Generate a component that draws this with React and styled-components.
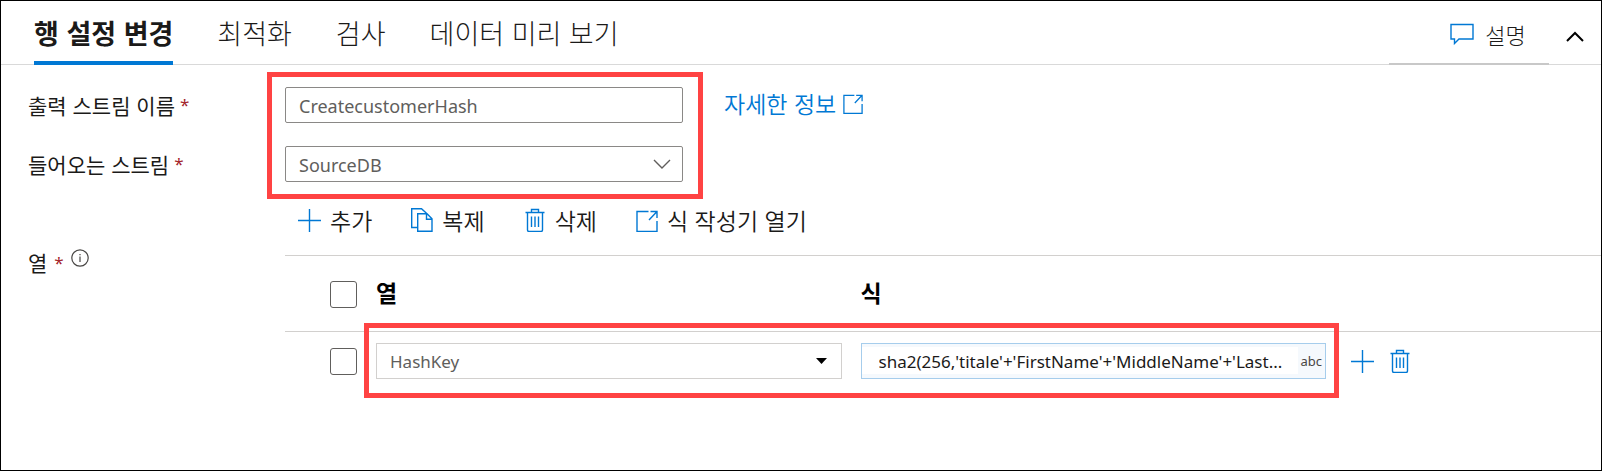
import React from 'react';
import styled, { createGlobalStyle, css } from 'styled-components';

const GlobalStyle = createGlobalStyle`
  *, *::before, *::after { box-sizing: border-box; }
  body {
    margin: 0;
    background: #ffffff;
    color: #1b1a19;
    font-family: "Noto Sans", "Noto Sans CJK KR", sans-serif;
  }
  button, input, select { font: inherit; color: inherit; margin: 0; }
  button { padding: 0; border: 0; background: none; cursor: pointer; }
`;

const BLUE = '#0078d4';
const RED = '#ff4343';
const hangul = css`font-family: "Noto Sans CJK KR", sans-serif;`;

const Page = styled.main`
  ${hangul}
  min-height: 100vh;
  border: 1px solid #000000;
`;

const Header = styled.header`
  display: flex;
  justify-content: space-between;
  height: 64px;
  border-bottom: 1px solid #d9d9d9;
`;

const Tabs = styled.nav`
  display: flex;
  gap: 44px;
  padding-left: 33px;
`;

const Tab = styled.button`
  height: 64px;
  padding-top: 4px;
  border-bottom: 4px solid ${p => (p.$active ? BLUE : 'transparent')};
  font-size: 27px;
  line-height: 56px;
  font-weight: ${p => (p.$active ? 700 : 300)};
  white-space: nowrap;
`;

const HeaderActions = styled.div`
  display: flex;
  align-items: stretch;
`;

const DescriptionButton = styled.button`
  display: flex;
  align-items: center;
  justify-content: center;
  gap: 11px;
  width: 160px;
  height: 64px;
  padding: 3px 0 0 38px;
  border-bottom: 2px solid #c8c8c8;
  font-size: 22px;
  font-weight: 300;
`;

const CollapseButton = styled.button`
  display: flex;
  align-items: center;
  justify-content: center;
  width: 52px;
  padding-top: 8px;
`;

const Form = styled.form`
  display: grid;
  grid-template-columns: 257px 398px 1fr;
  row-gap: 23px;
  padding: 22px 0 0 27px;
`;

const Label = styled.label`
  display: flex;
  align-items: center;
  gap: 5px;
  grid-column: 1;
  grid-row: ${p => p.$row};
  height: 36px;
  font-size: 21px;
  line-height: 32px;
`;

const Required = styled.span`
  color: #a4262c;
  font-family: "Noto Sans", sans-serif;
  font-size: 17px;
`;

const Field = styled.div`
  display: grid;
  align-items: center;
  grid-column: 2;
  grid-row: ${p => p.$row};
`;

const Input = styled.input`
  width: 100%;
  height: 36px;
  padding: 2px 13px 0;
  border: 1px solid #8a8886;
  border-radius: 2px;
  background: #ffffff;
  color: #605e5c;
  font-family: "Noto Sans", sans-serif;
  font-size: 18px;
  outline: 0;
`;

const SelectBox = styled.div`
  display: grid;
  align-items: center;
  width: 100%;

  & > * { grid-area: 1 / 1; }
  & > svg {
    justify-self: end;
    margin-right: ${p => (p.$plain ? '15px' : '12px')};
    pointer-events: none;
  }
`;

const Select = styled.select`
  width: 100%;
  height: 36px;
  padding: 2px 13px 0;
  appearance: none;
  border: 1px solid ${p => (p.$plain ? '#d2d0ce' : '#8a8886')};
  border-radius: ${p => (p.$plain ? '0' : '2px')};
  background: #ffffff;
  color: #605e5c;
  font-family: "Noto Sans", sans-serif;
  font-size: ${p => (p.$plain ? '17px' : '18px')};
  outline: 0;
`;

const FieldsHighlight = styled.div`
  grid-column: 2;
  grid-row: 1 / 3;
  margin: -15px -20px -17px -18px;
  border: 5px solid ${RED};
  pointer-events: none;
`;

const InfoLink = styled.a`
  display: flex;
  align-items: center;
  gap: 7px;
  grid-column: 3;
  grid-row: 1;
  height: 32px;
  padding-left: 41px;
  color: ${BLUE};
  font-size: 23px;
  font-weight: 350;
  line-height: 32px;
  text-decoration: none;

  svg { width: 20px; }
`;

const ColumnsSection = styled.section`
  display: grid;
  grid-template-columns: 257px minmax(0, 1fr);
  padding: 20px 0 0 27px;
`;

const ColumnsTitle = styled.h2`
  display: flex;
  align-items: center;
  gap: 7px;
  height: 36px;
  margin: 42px 0 0;
  font-size: 21px;
  font-weight: 400;

  svg { margin-bottom: 8px; }
`;

const Toolbar = styled.div`
  display: flex;
  gap: 39px;
  height: 53px;
  padding: 2px 0 0 13px;
`;

const ToolButton = styled.button`
  display: flex;
  align-items: center;
  gap: 9px;
  height: 32px;
  font-size: 23px;
  font-weight: 350;
  line-height: 32px;
  white-space: nowrap;
`;

const TableWrap = styled.div`
  position: relative;
`;

const Table = styled.table`
  width: 100%;
  table-layout: fixed;
  border-collapse: collapse;

  th, td { padding: 0 19px 0 0; text-align: left; }
  th {
    height: 76px;
    border-top: 1px solid #d2d0ce;
    border-bottom: 1px solid #d2d0ce;
    font-size: 23px;
    font-weight: 700;
    color: #000000;
  }
  th:not(:first-child) { padding-bottom: 4px; }
  td { height: 58px; }
`;

const CheckCol = styled.col`width: 91px;`;
const ActionCol = styled.col`width: 256px;`;

const Checkbox = styled.input`
  display: block;
  appearance: none;
  width: 27px;
  height: 27px;
  border: 1px solid #605e5c;
  border-radius: 3px;
  background: #ffffff;

  th &, td & { margin: 2px 0 0 45px; }
`;

const ExpressionBox = styled.div`
  display: flex;
  align-items: center;
  height: 36px;
  padding-right: 3px;
  border: 1px solid #a6cdec;
  background: #f5f9fd;
`;

const ExpressionInput = styled.input`
  flex: 1;
  min-width: 0;
  height: 27px;
  margin-right: 2px;
  padding: 2px 0 0 17px;
  border: 0;
  background: #ffffff;
  color: #1b1a19;
  font-family: "Noto Sans", sans-serif;
  font-size: 17px;
  outline: 0;
`;

const TypeTag = styled.span`
  color: #484644;
  font-family: "Noto Sans", sans-serif;
  font-size: 13px;
`;

const RowActions = styled.div`
  display: flex;
  align-items: center;
  gap: 15px;
  padding-left: 6px;

  button { display: flex; }
`;

const RowHighlight = styled.div`
  position: absolute;
  right: 262px;
  bottom: -8px;
  left: 79px;
  height: 75px;
  border: 5px solid ${RED};
  pointer-events: none;
`;

const Icon = ({ w = 22, h = 24, children, color = BLUE, stroke = 1.4 }) => (
  <svg width={w} height={h} viewBox={`0 0 ${w} ${h}`} fill="none" stroke={color} strokeWidth={stroke} aria-hidden="true">
    {children}
  </svg>
);

const PlusIcon = () => (
  <Icon w={23} h={24}><path d="M11.5 1v23M0 12.5h23" /></Icon>
);
const CopyIcon = () => (
  <Icon>
    <path d="M6 19.500H0.700V0.700h9.800l5 4.600M6.700 5.700H16l5 5V23.300H6.700zM15.500 5.700v5.500H21" />
  </Icon>
);
const TrashIcon = () => (
  <Icon>
    <path d="M1.500 4.500h19M7.500 4V1.500h7V4M3.500 4.500V22q0 1.500 1.500 1.500h12q1.500 0 1.500-1.500V4.500M7.500 8.500V19M11 8.500V19M14.500 8.500V19" />
  </Icon>
);
const OpenIcon = () => (
  <Icon>
    <path d="M12.500 3.500H1v20h20V13M14.500 3.500H21V10M21 3.500l-8 8.500" />
  </Icon>
);
const CommentIcon = () => (
  <Icon w={24} h={22}><path d="M1 1.500h22v14.500H9l-4.500 4.500V16H1z" /></Icon>
);
const InfoIcon = () => (
  <Icon w={18} h={18} color="#484644" stroke={1.2}>
    <circle cx="9" cy="9" r="8.200" />
    <path d="M9 7.500v5.500M9 5v1.300" />
  </Icon>
);

export default function App() {
  return (
    <Page lang="ko">
      <GlobalStyle />
      <Header>
        <Tabs>
          <Tab type="button" $active>행 설정 변경</Tab>
          <Tab type="button">최적화</Tab>
          <Tab type="button">검사</Tab>
          <Tab type="button">데이터 미리 보기</Tab>
        </Tabs>
        <HeaderActions>
          <DescriptionButton type="button"><CommentIcon />설명</DescriptionButton>
          <CollapseButton type="button" aria-label="접기">
            <Icon w={18} h={12} color="#000000" stroke={2}><path d="M1 10l8-8 8 8" /></Icon>
          </CollapseButton>
        </HeaderActions>
      </Header>

      <Form>
        <Label $row={1} htmlFor="output-name">출력 스트림 이름 <Required>*</Required></Label>
        <Field $row={1}>
          <Input id="output-name" type="text" defaultValue="CreatecustomerHash" />
        </Field>
        <InfoLink href="#info">자세한 정보 <OpenIcon /></InfoLink>
        <Label $row={2} htmlFor="incoming">들어오는 스트림 <Required>*</Required></Label>
        <Field $row={2}>
          <SelectBox>
            <Select id="incoming" defaultValue="SourceDB"><option>SourceDB</option></Select>
            <Icon w={18} h={12} color="#605e5c"><path d="M1 2l8 8 8-8" /></Icon>
          </SelectBox>
        </Field>
        <FieldsHighlight />
      </Form>

      <ColumnsSection>
        <ColumnsTitle>열 <Required>*</Required><InfoIcon /></ColumnsTitle>
        <div>
          <Toolbar>
            <ToolButton type="button"><PlusIcon />추가</ToolButton>
            <ToolButton type="button"><CopyIcon />복제</ToolButton>
            <ToolButton type="button"><TrashIcon />삭제</ToolButton>
            <ToolButton type="button"><OpenIcon />식 작성기 열기</ToolButton>
          </Toolbar>
          <TableWrap>
            <Table>
              <colgroup><CheckCol /><col /><col /><ActionCol /></colgroup>
              <thead>
                <tr>
                  <th><Checkbox type="checkbox" aria-label="모두 선택" /></th>
                  <th scope="col">열</th>
                  <th scope="col">식</th>
                  <th />
                </tr>
              </thead>
              <tbody>
                <tr>
                  <td><Checkbox type="checkbox" aria-label="HashKey 선택" /></td>
                  <td>
                    <SelectBox $plain>
                      <Select $plain aria-label="열" defaultValue="HashKey"><option>HashKey</option></Select>
                      <svg width="11" height="6" viewBox="0 0 11 6" aria-hidden="true"><path d="M0 0h11L5.500 6z" /></svg>
                    </SelectBox>
                  </td>
                  <td>
                    <ExpressionBox>
                      <ExpressionInput aria-label="식" defaultValue="sha2(256,'titale'+'FirstName'+'MiddleName'+'Last..." />
                      <TypeTag>abc</TypeTag>
                    </ExpressionBox>
                  </td>
                  <td>
                    <RowActions>
                      <button type="button" aria-label="추가"><PlusIcon /></button>
                      <button type="button" aria-label="삭제"><TrashIcon /></button>
                    </RowActions>
                  </td>
                </tr>
              </tbody>
            </Table>
            <RowHighlight />
          </TableWrap>
        </div>
      </ColumnsSection>
    </Page>
  );
}
